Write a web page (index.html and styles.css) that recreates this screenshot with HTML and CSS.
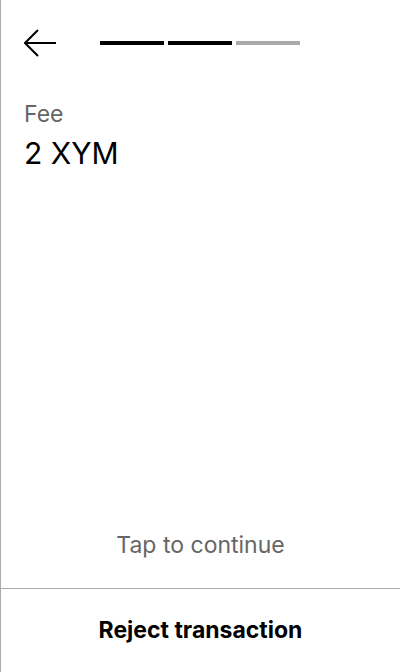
FILE: index.html
```html
<!DOCTYPE html>
<html>
<head>
<meta charset="utf-8">
<link rel="stylesheet" href="styles.css">
</head>
<body>
<div class="screen">
  <div class="top">
    <button class="back" aria-label="Back">
      <svg width="32" height="28" viewBox="0 0 32 28"><path d="M14 1 L1 14 L14 27 M1 14 H32" fill="none" stroke="#000" stroke-width="2"/></svg>
    </button>
    <div class="progress">
      <span class="seg done"></span>
      <span class="seg done"></span>
      <span class="seg"></span>
    </div>
  </div>
  <div class="content">
    <div class="label">Fee</div>
    <div class="value">2 XYM</div>
  </div>
  <div class="spacer"></div>
  <div class="tap">Tap to continue</div>
  <div class="reject">Reject transaction</div>
</div>
</body>
</html>
```
FILE: styles.css
```css
html, body {
  margin: 0;
  padding: 0;
  background: #fff;
}
body {
  font-family: Inter, "Noto Sans", sans-serif;
  color: #000;
}
.screen {
  width: 400px;
  height: 672px;
  box-sizing: border-box;
  border-left: 1px solid #aaa;
  display: flex;
  flex-direction: column;
}
.top {
  display: flex;
  align-items: center;
  padding: 29px 0 0 23px;
  height: 28px;
}
.back {
  border: 0;
  background: none;
  padding: 0;
  margin: 0;
  width: 32px;
  height: 28px;
  display: block;
}
.back svg {
  display: block;
}
.progress {
  display: flex;
  gap: 4px;
  margin-left: 44px;
}
.seg {
  width: 64px;
  height: 4px;
  background: #aaa;
  display: block;
}
.seg.done {
  background: #000;
}
.content {
  padding: 43px 23px 0;
}
.label {
  font-size: 23px;
  line-height: 28px;
  color: #666;
}
.value {
  font-size: 30px;
  line-height: 36px;
  margin-top: 7px;
}
.spacer {
  flex: 1;
}
.tap {
  text-align: center;
  font-size: 23px;
  line-height: 28px;
  color: #666;
  padding-bottom: 29px;
  border-bottom: 1px solid #aaa;
}
.reject {
  height: 83px;
  display: flex;
  align-items: center;
  justify-content: center;
  font-size: 23px;
  font-weight: 700;
  padding-bottom: 2px;
  box-sizing: border-box;
}
```
